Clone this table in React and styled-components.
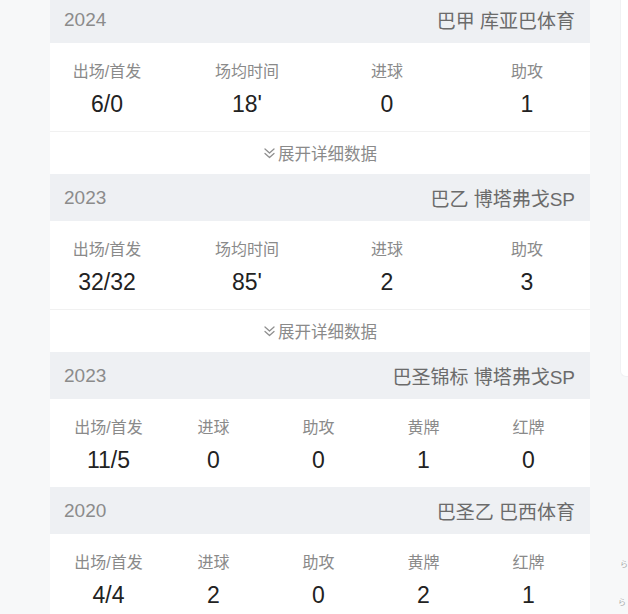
import React from "react";
import styled, { createGlobalStyle } from "styled-components";

const GlobalStyle = createGlobalStyle`
  html, body { margin: 0; padding: 0; }
  body {
    background: #f7f8f9;
    font-family: "Liberation Sans", "Noto Sans CJK SC", sans-serif;
    overflow: hidden;
  }
`;

const Page = styled.div`
  display: grid;
  grid-template-columns: 50px 540px 27px 1fr;
  height: 614px;
  overflow: hidden;
  background: #f7f8f9;
`;

const Gutter = styled.div``;

const Panel = styled.div`
  margin-top: -4px;
  background: #fff;
`;

const Side = styled.div`
  display: flex;
  flex-direction: column;
  overflow: hidden;
`;

const SideCard = styled.div`
  height: 376px;
  margin-left: 3px;
  background: #fff;
  border-left: 1px solid #f0f1f3;
  border-bottom: 1px solid #f0f1f3;
  border-bottom-left-radius: 6px;
`;

const SideNote = styled.div`
  margin-top: ${(p) => p.$top}px;
  margin-left: ${(p) => p.$left}px;
  font-size: 8px;
  line-height: 10px;
  color: #a8a8a8;
  white-space: nowrap;
`;

const Header = styled.div`
  height: 47px;
  display: flex;
  align-items: center;
  justify-content: space-between;
  padding: 0 15px 0 14px;
  background: #eef0f3;
  font-size: 19px;
`;

const Year = styled.span`
  color: #8b8b8b;
`;

const Team = styled.span`
  color: #6b6b6b;
`;

const Stats = styled.div`
  height: 88px;
  box-sizing: border-box;
  padding: 18px ${(p) => (p.$cols === 4 ? 6 : 3)}px 0 0;
  display: grid;
  grid-template-columns: repeat(${(p) => p.$cols}, ${(p) => (p.$cols === 4 ? 140 : 105)}px);
  justify-content: center;
  background: #fff;
`;

const Cell = styled.div`
  display: flex;
  flex-direction: column;
  align-items: center;
`;

const Label = styled.div`
  font-size: 16px;
  line-height: 22px;
  color: #8a8a8a;
  white-space: nowrap;
`;

const Value = styled.div`
  margin-top: 7px;
  font-size: 23px;
  line-height: 28px;
  color: #222;
  white-space: nowrap;
`;

const Expand = styled.div`
  height: 42px;
  border-top: 1px solid #f1f1f1;
  display: flex;
  align-items: center;
  justify-content: center;
  gap: 2px;
  font-size: 16.5px;
  color: #8a8a8a;
  background: #fff;
`;

const Chevrons = () => (
  <svg width="13" height="13" viewBox="0 0 13 13" fill="none" stroke="#8f8f8f" strokeWidth="1.3" strokeLinecap="round" strokeLinejoin="round">
    <polyline points="2,2 6.5,6 11,2" />
    <polyline points="2,6.5 6.5,10.5 11,6.5" />
  </svg>
);

const seasons = [
  {
    year: "2024",
    team: "巴甲 库亚巴体育",
    expand: true,
    stats: [
      ["出场/首发", "6/0"],
      ["场均时间", "18'"],
      ["进球", "0"],
      ["助攻", "1"],
    ],
  },
  {
    year: "2023",
    team: "巴乙 博塔弗戈SP",
    expand: true,
    stats: [
      ["出场/首发", "32/32"],
      ["场均时间", "85'"],
      ["进球", "2"],
      ["助攻", "3"],
    ],
  },
  {
    year: "2023",
    team: "巴圣锦标 博塔弗戈SP",
    expand: false,
    stats: [
      ["出场/首发", "11/5"],
      ["进球", "0"],
      ["助攻", "0"],
      ["黄牌", "1"],
      ["红牌", "0"],
    ],
  },
  {
    year: "2020",
    team: "巴圣乙 巴西体育",
    expand: false,
    stats: [
      ["出场/首发", "4/4"],
      ["进球", "2"],
      ["助攻", "0"],
      ["黄牌", "2"],
      ["红牌", "1"],
    ],
  },
];

export default function App() {
  return (
    <>
      <GlobalStyle />
      <Page>
        <Gutter />
        <Panel>
          {seasons.map((s, i) => (
            <React.Fragment key={i}>
              <Header>
                <Year>{s.year}</Year>
                <Team>{s.team}</Team>
              </Header>
              <Stats $cols={s.stats.length}>
                {s.stats.map(([l, v]) => (
                  <Cell key={l}>
                    <Label>{l}</Label>
                    <Value>{v}</Value>
                  </Cell>
                ))}
              </Stats>
              {s.expand && (
                <Expand>
                  <Chevrons />
                  <span>展开详细数据</span>
                </Expand>
              )}
            </React.Fragment>
          ))}
        </Panel>
        <Gutter />
        <Side>
          <SideCard />
          <SideNote $top={183} $left={3}>ら</SideNote>
          <SideNote $top={28} $left={1}>ら</SideNote>
        </Side>
      </Page>
    </>
  );
}
